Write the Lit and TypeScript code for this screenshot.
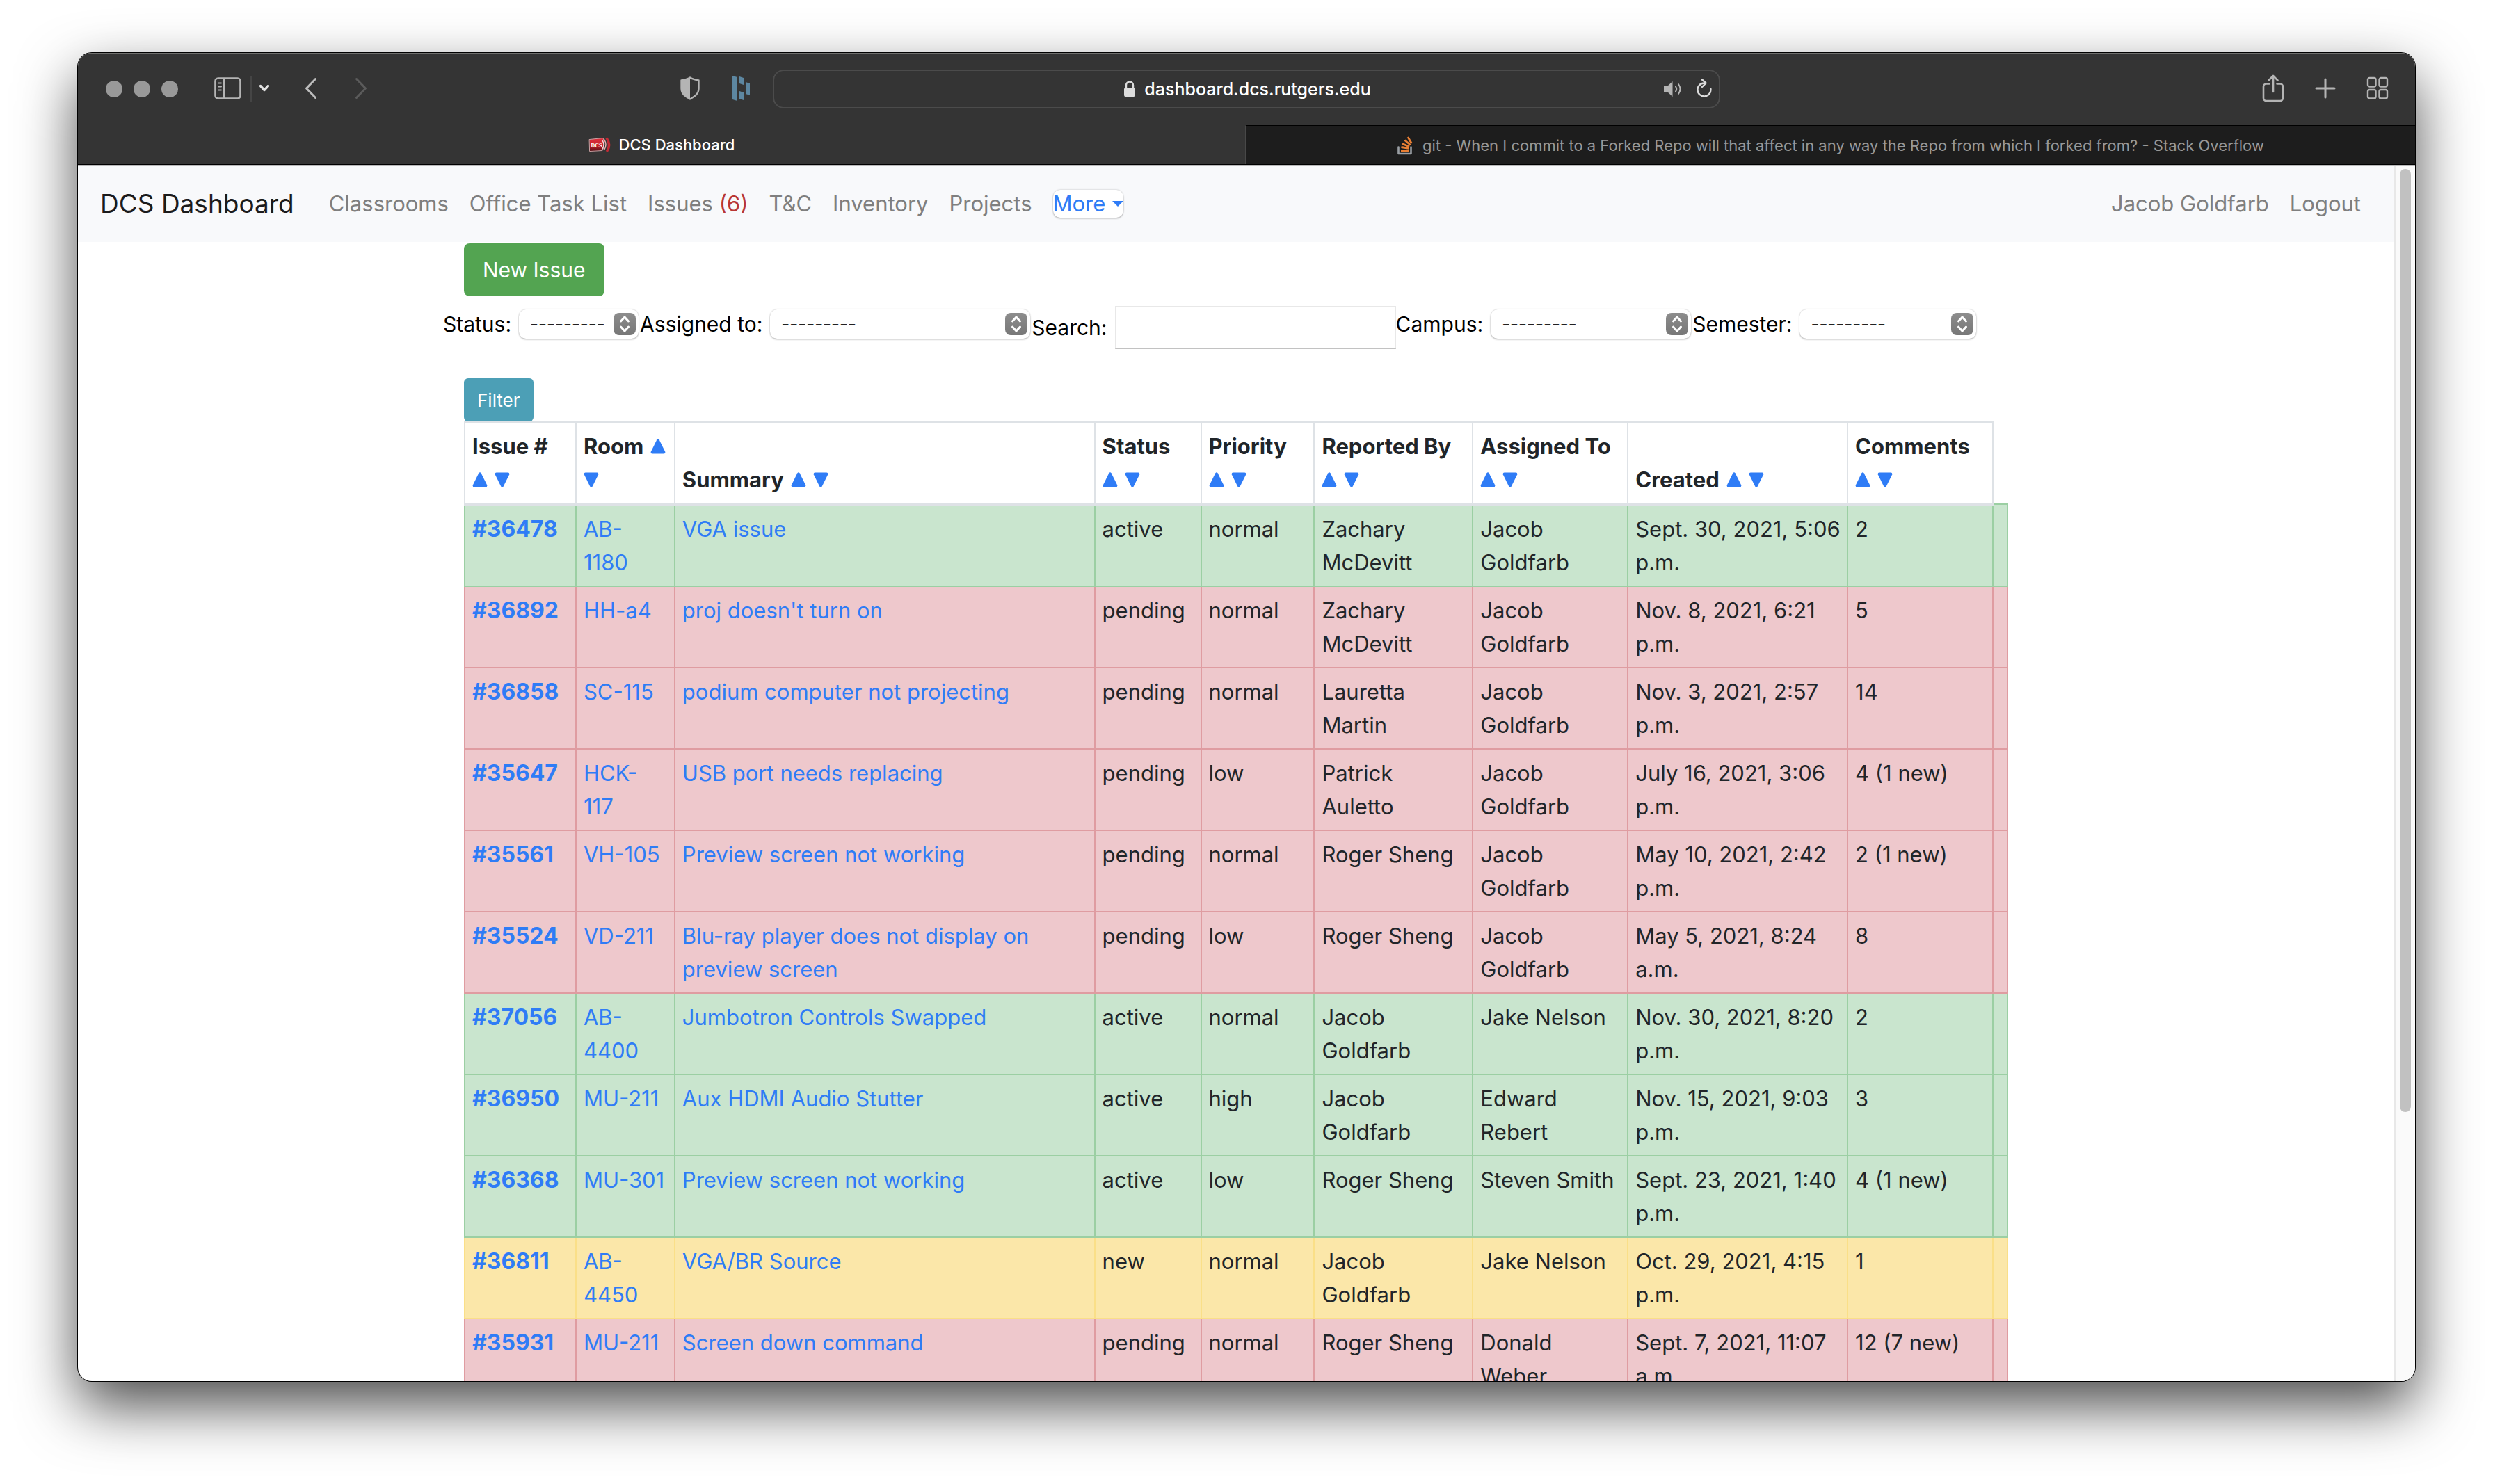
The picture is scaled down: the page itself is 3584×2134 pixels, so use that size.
import { LitElement, html, css, svg, nothing } from "lit";
import { customElement, property } from "lit/decorators.js";

type Tone = "success" | "danger" | "warning";

interface Issue {
  id: number;
  room: string;
  summary: string;
  status: string;
  priority: string;
  reporter: string;
  assignee: string;
  created: string;
  comments: string;
}

const TONES: Record<string, Tone> = { active: "success", pending: "danger", new: "warning" };

const issue = (
  id: number, room: string, summary: string, status: string, priority: string,
  reporter: string, assignee: string, created: string, comments: string,
): Issue => ({ id, room, summary, status, priority, reporter, assignee, created, comments });

const ISSUES: Issue[] = [
  issue(36478, "AB-1180", "VGA issue", "active", "normal", "Zachary McDevitt", "Jacob Goldfarb", "Sept. 30, 2021, 5:06 p.m.", "2"),
  issue(36892, "HH-a4", "proj doesn't turn on", "pending", "normal", "Zachary McDevitt", "Jacob Goldfarb", "Nov. 8, 2021, 6:21 p.m.", "5"),
  issue(36858, "SC-115", "podium computer not projecting", "pending", "normal", "Lauretta Martin", "Jacob Goldfarb", "Nov. 3, 2021, 2:57 p.m.", "14"),
  issue(35647, "HCK-117", "USB port needs replacing", "pending", "low", "Patrick Auletto", "Jacob Goldfarb", "July 16, 2021, 3:06 p.m.", "4 (1 new)"),
  issue(35561, "VH-105", "Preview screen not working", "pending", "normal", "Roger Sheng", "Jacob Goldfarb", "May 10, 2021, 2:42 p.m.", "2 (1 new)"),
  issue(35524, "VD-211", "Blu-ray player does not display on preview screen", "pending", "low", "Roger Sheng", "Jacob Goldfarb", "May 5, 2021, 8:24 a.m.", "8"),
  issue(37056, "AB-4400", "Jumbotron Controls Swapped", "active", "normal", "Jacob Goldfarb", "Jake Nelson", "Nov. 30, 2021, 8:20 p.m.", "2"),
  issue(36950, "MU-211", "Aux HDMI Audio Stutter", "active", "high", "Jacob Goldfarb", "Edward Rebert", "Nov. 15, 2021, 9:03 p.m.", "3"),
  issue(36368, "MU-301", "Preview screen not working", "active", "low", "Roger Sheng", "Steven Smith", "Sept. 23, 2021, 1:40 p.m.", "4 (1 new)"),
  issue(36811, "AB-4450", "VGA/BR Source", "new", "normal", "Jacob Goldfarb", "Jake Nelson", "Oct. 29, 2021, 4:15 p.m.", "1"),
  issue(35931, "MU-211", "Screen down command", "pending", "normal", "Roger Sheng", "Donald Weber", "Sept. 7, 2021, 11:07 a.m.", "12 (7 new)"),
];

/* "after" puts both arrows on their own line, "between" only the second one. */
const COLUMNS: { label: string; width: number; wrap: "after" | "between" | "none" }[] = [
  { label: "Issue #", width: 160, wrap: "after" },
  { label: "Room", width: 142, wrap: "between" },
  { label: "Summary", width: 604, wrap: "none" },
  { label: "Status", width: 153, wrap: "after" },
  { label: "Priority", width: 163, wrap: "after" },
  { label: "Reported By", width: 228, wrap: "after" },
  { label: "Assigned To", width: 223, wrap: "after" },
  { label: "Created", width: 316, wrap: "none" },
  { label: "Comments", width: 209, wrap: "after" },
  { label: "", width: 21, wrap: "none" },
];
const TABLE_WIDTH = COLUMNS.reduce((sum, c) => sum + c.width, 0);

/* Room codes longer than this go on two lines, split after the hyphen. */
const ROOM_LINE = 6;

const up = html`<a class="sort" href="#" aria-label="Sort ascending"><svg viewBox="0 0 22 22"><path d="M9.4 1.2Q11-.6 12.6 1.2L21.2 18.6Q21.8 21.4 19.4 21.6H2.6Q.2 21.4.8 18.6Z"/></svg></a>`;
const down = html`<a class="sort" href="#" aria-label="Sort descending"><svg viewBox="0 0 22 22"><path d="M9.4 20.8Q11 22.6 12.6 20.8L21.2 3.4Q21.8.6 19.4.4H2.6Q.2.6.8 3.4Z"/></svg></a>`;

const icon = (w: number, h: number, body: unknown) =>
  html`<svg class="icon" width=${w} height=${h} viewBox="0 0 ${w} ${h}" aria-hidden="true">${body}</svg>`;

const icons = {
  sidebar: icon(40, 34, svg`<rect x="1.5" y="2.5" width="36" height="29" rx="4" stroke-width="2.6"/><path d="M14 3v28" stroke-width="2.4"/><path d="M6 9.500h4M6 14.500h4M6 19.500h4" stroke-width="2"/>`),
  chevron: icon(16, 12, svg`<path d="M2.500 2.500l5.500 6 5.500-6" stroke-width="3.400"/>`),
  back: icon(18, 32, svg`<path d="M15.500 2.500L2.500 16l13 13.500" stroke-width="3"/>`),
  forward: icon(18, 32, svg`<path d="M2.500 2.500L15.500 16l-13 13.500" stroke-width="3"/>`),
  shield: icon(30, 34, svg`<path d="M15 1.500C11 4 6 5 2.500 5.500V17c0 8 6 12 12.500 15.500C21.500 29 27.500 25 27.500 17V5.500C24 5 19 4 15 1.500Z" stroke-width="2.400"/><path class="solid" d="M15 1.500C11 4 6 5 2.500 5.500V17c0 8 6 12 12.500 15.500Z"/>`),
  dash: icon(26, 38, svg`<g class="dash"><path d="M0 1l7 2v34l-7-2zM10 2l6 2v10l-6-2zM10 23l6 2v11l-6-2zM19 10l6 2v17l-6-2z"/></g>`),
  lock: icon(18, 26, svg`<path d="M4 12V7.500a5 5 0 0 1 10 0V12" stroke-width="2.400"/><rect class="solid" x="1" y="11" width="16" height="13" rx="2.500"/>`),
  speaker: icon(30, 26, svg`<path class="solid" d="M1 9h5l7.500-7v22L6 17H1z"/><path d="M18 9.500q2.500 3.500 0 7M22 6q5 7 0 14" stroke-width="2"/>`),
  reload: icon(26, 30, svg`<path d="M13 6.500A9.500 9.500 0 1 0 22.300 14.500M10 1.500l5.500 5-5.500 5.500" stroke-width="2.400"/>`),
  share: icon(32, 40, svg`<path d="M10.500 13.500H6a4 4 0 0 0-4 4V34a4 4 0 0 0 4 4h20a4 4 0 0 0 4-4V17.500a4 4 0 0 0-4-4h-4.500M16 25V3M9.500 8.500L16 2l6.500 6.500" stroke-width="2.600"/>`),
  plus: icon(30, 30, svg`<path d="M15 2v26M2 15h26" stroke-width="3"/>`),
  grid: icon(32, 34, svg`<g stroke-width="2.400"><rect x="2" y="2" width="11.500" height="12.500" rx="2.500"/><rect x="18.500" y="2" width="11.500" height="12.500" rx="2.500"/><rect x="2" y="19" width="11.500" height="12.500" rx="2.500"/><rect x="18.500" y="19" width="11.500" height="12.500" rx="2.500"/></g>`),
  stack: icon(24, 28, svg`<path d="M1.500 16.500v9.500h18v-9.500" stroke="#9a9fa4" stroke-width="2.600"/><path d="M5 21.500h11M5.500 16.500l10.800 1.800M7 11.500l10 4.600M10.500 6.500l8.200 7M15 2l5.400 9.300" stroke="#e87f34" stroke-width="2.800" stroke-linecap="butt"/>`),
  dcs: icon(32, 22, svg`<defs><linearGradient id="red" x1="0" y1="0" x2="0" y2="1"><stop offset="0" stop-color="#e0303c"/><stop offset="0.600" stop-color="#c4202c"/><stop offset="1" stop-color="#4a0d12"/></linearGradient></defs><path d="M1.500 3.500L21 1.500q4 9-1 18L2 20.500Z" fill="url(#red)" stroke="#c9a0a2" stroke-width="1"/><text x="3.500" y="14.500" font-size="8" font-weight="700" font-family="Liberation Serif, serif" fill="#fff" stroke="none">DCS</text><path d="M20 5q4 6 0 12" stroke="#f0d0d0" stroke-width="1.400"/><path d="M22.500 3.500q5 7.500 0 15" stroke="#e8b0b0" stroke-width="1.400"/><path d="M26.500 2.500q6 8.500.500 17" stroke="#c22a35" stroke-width="3.600"/>`),
  stepper: icon(32, 32, svg`<defs><linearGradient id="grey" x1="0" y1="0" x2="0" y2="1"><stop offset="0" stop-color="#8d8d8d"/><stop offset="1" stop-color="#777"/></linearGradient></defs><rect width="32" height="32" rx="8" fill="url(#grey)" stroke="none"/><path d="M10.500 12l5.500-6 5.500 6M10.500 20l5.500 6 5.500-6" stroke="#fff" stroke-width="3"/>`),
};

const shared = css`
  :host, *, *::before, *::after { box-sizing: border-box; }
  a { color: inherit; text-decoration: none; }
  button { font: inherit; color: inherit; border: 0; padding: 0; margin: 0; background: none; }
  .icon { display: block; flex: none; fill: none; stroke: currentColor; stroke-linecap: round; stroke-linejoin: round; }
  .solid { fill: currentColor; stroke: none; }
`;

@customElement("browser-chrome")
class BrowserChrome extends LitElement {
  static styles = [shared, css`
    :host { display: block; background: #343434; color: #b4b4b4; }
    .toolbar { display: grid; grid-template-columns: 1fr minmax(0, 1362px) 1fr; align-items: center; height: 104px; padding-bottom: 2px; border-top: 2px solid #70706e; }
    .side { display: flex; align-items: center; }
    .side button { padding-bottom: 3px; }
    .lights { display: flex; gap: 16px; margin-left: 40px; }
    .light { width: 24px; height: 24px; border-radius: 50%; background: #999; }
    .sidebar { margin-left: 52px; }
    .rule { width: 2px; height: 36px; margin: 0 10px 0 12px; background: #454545; }
    .chevron { color: #e2e2e2; }
    .back { margin-left: 50px; color: #bcbcbc; }
    .forward { margin-left: 54px; color: #5b5b5b; }
    .tools { display: flex; align-items: center; gap: 46px; margin: 0 32px 0 auto; }
    .dash { fill: #5d87a1; stroke: none; }
    .address { display: flex; align-items: center; height: 56px; padding: 0 8px 0 12px; border: 2px solid #4b4b4b; border-radius: 16px; }
    .url { display: flex; align-items: center; gap: 12px; margin: 0 auto; padding-left: 70px; color: #fff; font-size: 25px; font-weight: 500; }
    .url .icon { color: #dcdcdc; }
    .media { display: flex; align-items: center; gap: 16px; }
    .reload { color: #dcdcdc; }
    .actions { display: flex; align-items: center; gap: 44px; margin: 0 38px 0 auto; }
    .tabs { display: grid; grid-template-columns: calc(50% - 2px) 1fr; height: 57px; border-bottom: 1px solid #000; font-size: 22px; }
    .tab { display: flex; align-items: center; justify-content: center; gap: 12px; min-width: 0; white-space: nowrap; }
    .current { color: #fff; font-weight: 500; }
    .other { background: #1d1d1d; color: #989898; border-top: 1px solid #000; border-left: 2px solid #484848; }
  `];

  render() {
    return html`
      <div class="toolbar">
        <div class="side">
          <div class="lights"><span class="light"></span><span class="light"></span><span class="light"></span></div>
          <button class="sidebar" aria-label="Sidebar">${icons.sidebar}</button>
          <span class="rule"></span>
          <button class="chevron" aria-label="Tab groups">${icons.chevron}</button>
          <button class="back" aria-label="Back">${icons.back}</button>
          <button class="forward" aria-label="Forward">${icons.forward}</button>
          <div class="tools">
            <button aria-label="Privacy report">${icons.shield}</button>
            <button aria-label="Passwords">${icons.dash}</button>
          </div>
        </div>
        <div class="address">
          <div class="url">${icons.lock}<span>dashboard.dcs.rutgers.edu</span></div>
          <div class="media">
            <button aria-label="Mute">${icons.speaker}</button>
            <button class="reload" aria-label="Reload">${icons.reload}</button>
          </div>
        </div>
        <div class="side">
          <div class="actions">
            <button aria-label="Share">${icons.share}</button>
            <button aria-label="New tab">${icons.plus}</button>
            <button aria-label="Tab overview">${icons.grid}</button>
          </div>
        </div>
      </div>
      <div class="tabs">
        <a class="tab current" href="#">${icons.dcs}<span>DCS Dashboard</span></a>
        <a class="tab other" href="#">${icons.stack}<span>git - When I commit to a Forked Repo will that affect in any way the Repo from which I forked from? - Stack Overflow</span></a>
      </div>`;
  }
}

@customElement("site-nav")
class SiteNav extends LitElement {
  static styles = [shared, css`
    :host { display: block; }
    .nav { display: flex; align-items: center; height: 110px; padding: 0 48px 0 32px; background: #f8f9fb; color: #7f7f7f; font-size: 31px; line-height: 48px; white-space: nowrap; }
    .brand { margin-right: 50px; color: #1b1b1c; font-size: 37px; }
    .links { display: flex; align-items: center; gap: 30px; }
    .count { color: #b93634; }
    .more { display: flex; align-items: center; gap: 10px; height: 40px; border-radius: 10px; background: #fff; color: #2f7cf6; box-shadow: 0 0 2px rgba(0, 0, 0, 0.3), 0 2px 2px rgba(0, 0, 0, 0.15); }
    .caret { border: 8px solid transparent; border-top-color: currentColor; border-bottom: 0; }
    .account { margin-left: auto; }
  `];

  render() {
    return html`
      <nav class="nav">
        <a class="brand" href="#">DCS Dashboard</a>
        <div class="links">
          <a href="#">Classrooms</a>
          <a href="#">Office Task List</a>
          <a href="#">Issues <span class="count">(6)</span></a>
          <a href="#">T&amp;C</a>
          <a href="#">Inventory</a>
          <a href="#">Projects</a>
          <button class="more">More<span class="caret"></span></button>
        </div>
        <div class="links account">
          <a href="#">Jacob Goldfarb</a>
          <a href="#">Logout</a>
        </div>
      </nav>`;
  }
}

@customElement("issue-filters")
class IssueFilters extends LitElement {
  static styles = [shared, css`
    :host { display: block; }
    .fields { display: flex; align-items: flex-start; margin-left: -30px; font-size: 30px; line-height: 52px; white-space: nowrap; }
    .field { display: flex; align-items: center; gap: 11px; padding-right: 2px; }
    .searching { line-height: 62px; padding-right: 0; }
    .select { display: grid; align-items: center; }
    .select > * { grid-area: 1 / 1; }
    .select .icon { justify-self: end; margin-right: 4px; pointer-events: none; }
    select { appearance: none; width: 100%; height: 42px; margin: 0; padding: 0 44px 0 16px; border: 0; border-radius: 10px; background: #fff; color: #222; font: 26px/42px Inter, "Liberation Sans", sans-serif; box-shadow: 0 0 2px rgba(0, 0, 0, 0.3), 0 2px 2px rgba(0, 0, 0, 0.15); }
    .status { width: 172px; }
    .assigned { width: 374px; }
    .campus { width: 288px; }
    .semester { width: 254px; }
    input { width: 404px; height: 62px; margin: 0; padding: 0 8px; border: 1px solid #e8e8e8; border-bottom: 2px solid #c2c2c2; border-radius: 0; background: #fff; font: 30px Inter, "Liberation Sans", sans-serif; }
  `];

  private choice(id: string, label: string) {
    return html`
      <div class="field">
        <label for=${id}>${label}</label>
        <span class="select ${id}"><select id=${id}><option>---------</option></select>${icons.stepper}</span>
      </div>`;
  }

  render() {
    return html`
      <div class="fields">
        ${this.choice("status", "Status:")}
        ${this.choice("assigned", "Assigned to:")}
        <div class="field searching"><label for="search">Search:</label><input id="search" type="text"></div>
        ${this.choice("campus", "Campus:")}
        ${this.choice("semester", "Semester:")}
      </div>`;
  }
}

@customElement("issue-table")
class IssueTable extends LitElement {
  @property({ attribute: false }) issues: Issue[] = [];

  static styles = [shared, css`
    :host { display: block; }
    table { width: 100%; table-layout: fixed; border-collapse: collapse; color: #212529; font-size: 31px; line-height: 48px; }
    th, td { padding: 10px 8px 9px 10px; border: 2px solid var(--line); text-align: left; vertical-align: top; }
    thead { --line: #dee2e6; }
    thead th { vertical-align: bottom; border-bottom-width: 4px; white-space: nowrap; }
    .success { --line: #9bcfa3; background: #c9e5ce; }
    .danger { --line: #df9ca1; background: #eec8cc; }
    .warning { --line: #fadf88; background: #fbe7a9; }
    .link { color: #2f7cf6; }
    .number { font-size: 32px; }
    .sort { display: inline-block; width: 22px; height: 22px; margin-left: 10px; fill: #2f7cf6; }
    .sort svg { display: block; }
    br + .sort { margin-left: 0; }
  `];

  private room(code: string) {
    if (code.length <= ROOM_LINE) return code;
    const [building, number] = code.split("-");
    return html`${building}-<br>${number}`;
  }

  render() {
    return html`
      <table>
        <colgroup>${COLUMNS.map((c) => html`<col style="width:${(c.width / TABLE_WIDTH) * 100}%">`)}</colgroup>
        <thead>
          <tr>${COLUMNS.filter((c) => c.label).map((c) => html`<th scope="col">${c.label}${c.wrap === "after" ? html`<br>` : nothing}${up}${c.wrap === "between" ? html`<br>` : nothing}${down}</th>`)}</tr>
        </thead>
        <tbody>
          ${this.issues.map((i) => html`
            <tr class=${TONES[i.status]}>
              <th class="number" scope="row"><a class="link" href="#">#${i.id}</a></th>
              <td><a class="link" href="#">${this.room(i.room)}</a></td>
              <td><a class="link" href="#">${i.summary}</a></td>
              <td>${i.status}</td>
              <td>${i.priority}</td>
              <td>${i.reporter}</td>
              <td>${i.assignee}</td>
              <td>${i.created}</td>
              <td>${i.comments}</td>
              <td></td>
            </tr>`)}
        </tbody>
      </table>`;
  }
}

@customElement("app-root")
class AppRoot extends LitElement {
  static styles = [shared, css`
    :host { display: block; height: 100vh; padding: 76px 112px 148px; overflow: hidden; background: #fff; font-family: Inter, "Liberation Sans", sans-serif; }
    .window { display: flex; flex-direction: column; height: 100%; overflow: hidden; border-radius: 20px; background: #fff; box-shadow: 0 0 0 1px #000, 0 36px 84px rgba(0, 0, 0, 0.7); }
    .viewport { display: flex; flex: 1; min-height: 0; border-top: 1px solid #b9b9ba; }
    .page { flex: 1; min-width: 0; overflow: hidden; }
    .container { max-width: 2280px; margin: 0 auto; padding: 2px 30px; }
    .track { width: 30px; padding: 5px 6px; border-left: 2px solid #e8e8e8; background: #fafafa; }
    .thumb { width: 16px; height: 78%; border-radius: 8px; background: #c1c1c1; }
    .new, .filter { display: block; border-radius: 8px; color: #fff; }
    .new { height: 76px; padding: 0 27px; margin-bottom: 14px; background: #53a451; font-size: 30px; }
    .filter { height: 62px; padding: 0 19px; margin-top: 42px; border-radius: 6px; background: #4c9fb6; font-size: 26px; }
  `];

  render() {
    return html`
      <div class="window">
        <browser-chrome></browser-chrome>
        <div class="viewport">
          <div class="page">
            <site-nav></site-nav>
            <main class="container">
              <button class="new">New Issue</button>
              <issue-filters></issue-filters>
              <button class="filter">Filter</button>
              <issue-table .issues=${ISSUES}></issue-table>
            </main>
          </div>
          <div class="track"><div class="thumb"></div></div>
        </div>
      </div>`;
  }
}
